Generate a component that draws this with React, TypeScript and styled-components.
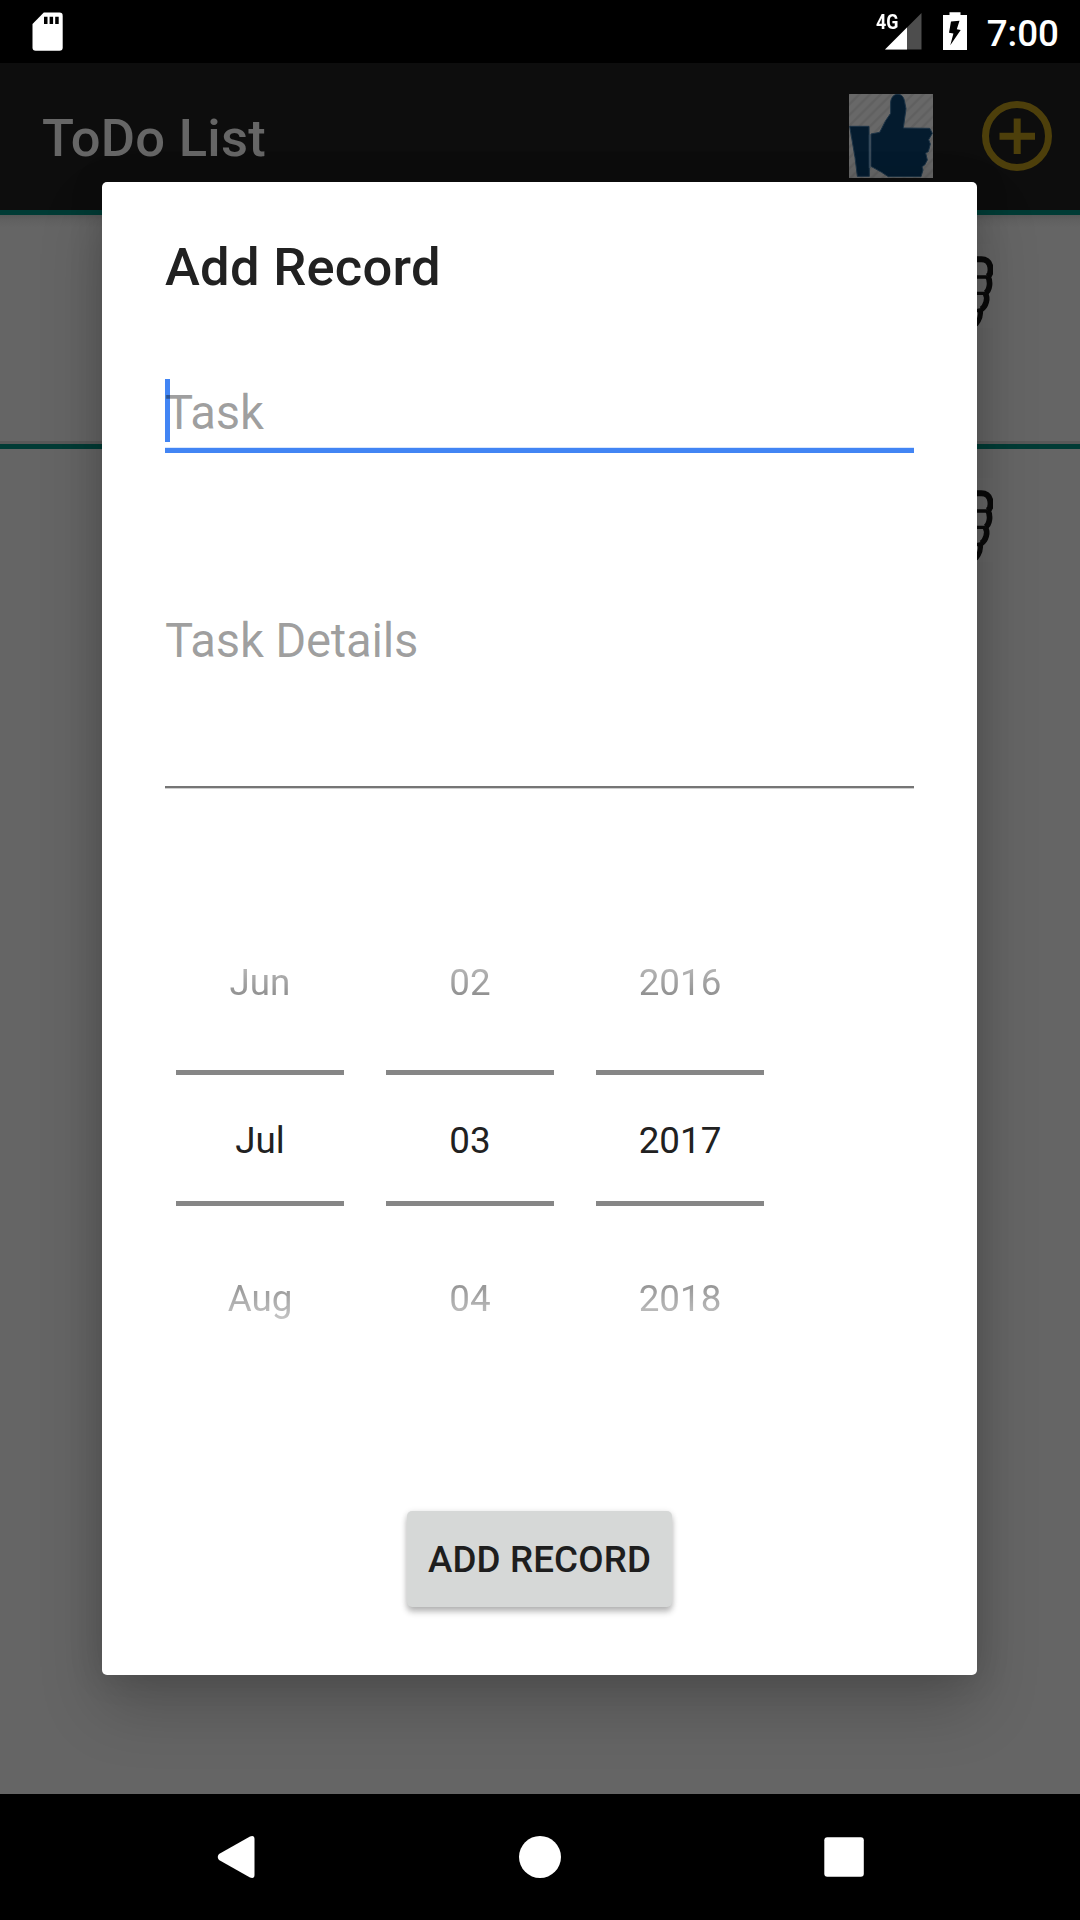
import React from "react";
import styled, { createGlobalStyle } from "styled-components";

const GlobalStyle = createGlobalStyle`
  * { box-sizing: border-box; }
  html, body { margin: 0; padding: 0; background: #000; }
  body { font-family: Roboto, "Noto Sans", sans-serif; overflow: hidden; }
`;

const Screen = styled.div`
  position: relative;
  width: 1080px;
  height: 1920px;
  display: flex;
  flex-direction: column;
  background: #656565;
  overflow: hidden;
`;

const StatusBar = styled.header`
  height: 63px;
  flex: none;
  display: flex;
  align-items: flex-start;
  justify-content: space-between;
  padding: 12px 21px 0 32px;
  background: #000;
  color: #fff;
`;

const StatusGroup = styled.div`
  display: flex;
  align-items: flex-start;
`;

const NetworkLabel = styled.span`
  width: 9px;
  font-size: 20.5px;
  font-weight: 700;
  line-height: 20px;
  white-space: nowrap;
  transform: scaleX(0.87);
  transform-origin: left center;
`;

const BatterySlot = styled.div`
  margin-left: 21px;
  width: 25px;
  height: 39px;
`;

const Clock = styled.span`
  margin-left: 17px;
  width: 74px;
  text-align: right;
  font-size: 36.75px;
  font-weight: 500;
  line-height: 43px;
`;

const AppBar = styled.div`
  height: 147px;
  flex: none;
  display: flex;
  align-items: flex-start;
  padding: 31px 27px 0 42px;
  background: #0d0d0d;
`;

const AppTitle = styled.h1`
  flex: 1;
  margin: 13px 0 0;
  font-size: 52.5px;
  font-weight: 500;
  line-height: 62px;
  letter-spacing: 0.28px;
  color: #666;
`;

const AddIcon = styled.svg`
  margin: 7px 0 0 48px;
`;

const Divider = styled.div`
  height: 5px;
  flex: none;
  background: #003b35;
`;

const TaskRow = styled.div<{ $first?: boolean }>`
  height: ${(p) => (p.$first ? "229px" : "auto")};
  flex: ${(p) => (p.$first ? "none" : "1")};
  display: flex;
  justify-content: flex-end;
  align-items: flex-start;
  padding: 29px 87px 0 0;
  border-bottom: ${(p) => (p.$first ? "3px solid #595959" : "none")};
  background: ${(p) =>
    p.$first ? "linear-gradient(#585858 0, #616161 6px, #656565 13px)" : "#656565"};
`;

const NavBar = styled.nav`
  height: 126px;
  flex: none;
  display: flex;
  align-items: center;
  justify-content: space-between;
  padding: 0 215px;
  background: #000;
`;

const Dialog = styled.section`
  position: absolute;
  left: 102px;
  top: 182px;
  width: 875px;
  height: 1493px;
  padding: 54px 63px 0;
  display: flex;
  flex-direction: column;
  border-radius: 5px;
  background: #fff;
  box-shadow: 0 32px 64px rgba(0, 0, 0, 0.2), 0 0 34px rgba(0, 0, 0, 0.14);
`;

const DialogTitle = styled.h2`
  margin: 0;
  font-size: 52.5px;
  font-weight: 500;
  line-height: 63px;
  letter-spacing: 0.28px;
  color: #212121;
`;

const Field = styled.div<{ $top: number; $height: number; $focused?: boolean }>`
  margin-top: ${(p) => p.$top}px;
  height: ${(p) => p.$height}px;
  display: flex;
  align-items: flex-start;
  border-bottom: ${(p) => (p.$focused ? "5px solid #4285f4" : "2px solid #757575")};
  box-shadow: ${(p) => (p.$focused ? "inset 0 -1px #d9e7fd" : "0 1px #cfcfcf")};
`;

const Caret = styled.span`
  width: 5px;
  height: 63px;
  margin-right: -5px;
  background: #4285f4;
`;

const Hint = styled.span`
  position: relative;
  padding-top: 3px;
  font-size: 47.25px;
  line-height: 63px;
  letter-spacing: -0.24px;
  color: rgba(0, 0, 0, 0.38);
`;

const DatePicker = styled.div`
  margin: 107px 0 0 11px;
  display: flex;
  gap: 42px;
`;

const Wheel = styled.div`
  width: 168px;
  display: flex;
  flex-direction: column;
  font-size: 36.75px;
  color: #212121;
  text-align: center;
`;

const Previous = styled.span`
  height: 175px;
  line-height: 175px;
  mask-image: linear-gradient(to bottom, transparent 18px, #000 184px);
`;

const Selected = styled.span`
  height: 136px;
  padding-top: 5px;
  line-height: 121px;
  border: solid #868686;
  border-width: 5px 0;
`;

const Next = styled.span`
  height: 185px;
  line-height: 185px;
  mask-image: linear-gradient(to bottom, #000 -9px, transparent 157px);
`;

const SubmitButton = styled.button`
  margin-top: 120px;
  align-self: center;
  width: 265px;
  height: 96px;
  padding: 1px 0 0;
  border: 0;
  border-radius: 5px;
  background: #d6d8d7;
  box-shadow: 0 5px 6px rgba(0, 0, 0, 0.24), 0 1px 6px rgba(0, 0, 0, 0.12);
  font-family: inherit;
  font-size: 36.75px;
  font-weight: 500;
  letter-spacing: 0.12px;
  white-space: nowrap;
  color: #1e1e1e;
`;

const SdCard = () => (
  <svg width="31" height="40" viewBox="0 0 31 40">
    <path
      d="M11.8.5H27.5a3.2 3.2 0 0 1 3.2 3.2V35.6a3.2 3.2 0 0 1-3.2 3.2H3.7A3.2 3.2 0 0 1 .5 35.600V12Z"
      fill="#fff"
    />
    <path d="M12 4.700h3.500V12H12ZM17.600 4.700h3.500V12h-3.500ZM23.200 4.700h3.500V12h-3.500Z" fill="#000" />
  </svg>
);

const Signal = () => (
  <svg width="37" height="38" viewBox="0 0 37 38">
    <path d="M36.500 1V37.500H0Z" fill="#4d4d4d" />
    <path d="M22 15.500V37.500H0Z" fill="#fff" />
  </svg>
);

const Battery = () => (
  <svg width="25" height="39" viewBox="0 0 25 39">
    <path d="M6.500.2H17.500V3H24V38H0V3H6.500Z" fill="#fff" />
    <path d="M8 9.500 16.500 8.700 13.800 17.300 17.700 18 7.300 33.200 10.400 21.600 6 20.700Z" fill="#000" />
  </svg>
);

const ThumbUp = () => (
  <svg width="84" height="84" viewBox="0 0 252 252">
    <defs>
      <pattern id="hatch" width="32" height="32" patternUnits="userSpaceOnUse">
        <rect width="32" height="32" fill="#686868" />
        <path d="M-8 8 8-8M0 32 32 0M24 40 40 24" stroke="#606060" strokeWidth="7" />
      </pattern>
    </defs>
    <rect width="252" height="252" fill="url(#hatch)" />
    <g fill="#041b2e" stroke="#1c3346" strokeWidth="3" strokeLinejoin="round">
      <path d="M2 97H60L61 247H25L18 190Z" />
      <path d="M66 120 92 115 110 80 125 58V24C127 8 136 1 146 1 158 1 165 10 167 24L171 44 163 102 242 103 250 118 239 137 244 150 238 173 230 177 235 198 227 213 219 218 222 228 216 248H118L98 235 66 217Z" />
    </g>
    <path d="M62 122V222" stroke="#33485a" strokeWidth="5" />
  </svg>
);

const Fist = () => (
  <svg width="84" height="84" viewBox="0 0 252 252" fill="none" stroke="#0a0a0a" strokeWidth="18">
    <rect width="252" height="252" fill="#fff" fillOpacity="0.012" stroke="none" />
    <path d="M190 46H212C230 44 242 53 244 69 246 82 243 94 235 98" />
    <path d="M237 98C245 112 243 140 229 147" strokeWidth="17" />
    <path d="M229 148C238 163 231 187 217 196" strokeWidth="17" />
    <path d="M214 195C218 218 210 230 200 242" strokeWidth="15" />
    <path d="M190 99H236M190 148H230M190 203 217 197" strokeWidth="10" />
  </svg>
);

const PlusCircle = () => (
  <AddIcon width="72" height="72" viewBox="0 0 72 72" fill="none" stroke="#4d3f0b" strokeWidth="7">
    <circle cx="36" cy="35" r="31.500" />
    <path d="M18.500 35.200H54M36.200 17.500V53" />
  </AddIcon>
);

const wheels = [
  ["Jun", "Jul", "Aug"],
  ["02", "03", "04"],
  ["2016", "2017", "2018"],
];

export default function App() {
  return (
    <>
      <GlobalStyle />
      <Screen>
        <StatusBar>
          <SdCard />
          <StatusGroup>
            <NetworkLabel>4G</NetworkLabel>
            <Signal />
            <BatterySlot>
              <Battery />
            </BatterySlot>
            <Clock>7:00</Clock>
          </StatusGroup>
        </StatusBar>
        <AppBar>
          <AppTitle>ToDo List</AppTitle>
          <ThumbUp />
          <PlusCircle />
        </AppBar>
        <Divider />
        <TaskRow $first>
          <Fist />
        </TaskRow>
        <Divider />
        <TaskRow>
          <Fist />
        </TaskRow>
        <Dialog>
          <DialogTitle>Add Record</DialogTitle>
          <Field $top={80} $height={74} $focused>
            <Caret />
            <Hint>Task</Hint>
          </Field>
          <Field $top={154} $height={181}>
            <Hint>Task Details</Hint>
          </Field>
          <DatePicker>
            {wheels.map(([previous, selected, next]) => (
              <Wheel key={selected}>
                <Previous>{previous}</Previous>
                <Selected>{selected}</Selected>
                <Next>{next}</Next>
              </Wheel>
            ))}
          </DatePicker>
          <SubmitButton>ADD RECORD</SubmitButton>
        </Dialog>
        <NavBar>
          <svg width="42" height="44" viewBox="0 0 42 44">
            <path d="M4 19 35 1.500Q39.500 0 39.500 4V40Q39.500 44 35 42.500L4 25Q1.500 22 4 19Z" fill="#fff" />
          </svg>
          <svg width="44" height="44" viewBox="0 0 44 44">
            <circle cx="22" cy="22" r="21" fill="#fff" />
          </svg>
          <svg width="42" height="44" viewBox="0 0 42 44">
            <rect x="1.300" y="2.300" width="39.500" height="39.500" rx="3" fill="#fff" />
          </svg>
        </NavBar>
      </Screen>
    </>
  );
}
